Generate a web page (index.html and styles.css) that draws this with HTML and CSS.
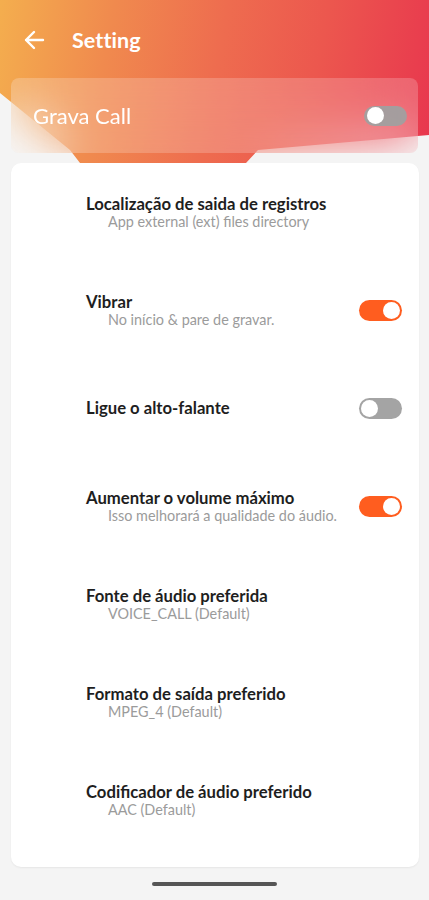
FILE: index.html
```html
<!DOCTYPE html>
<html lang="pt">
<head>
<meta charset="utf-8">
<title>Setting</title>
<link rel="stylesheet" href="styles.css">
</head>
<body>
<div class="app">
  <div class="hero-bg"></div>
  <header class="topbar">
    <svg class="back" width="22" height="22" viewBox="0 0 22 22" aria-hidden="true">
      <path d="M20 11H3M11 3L3 11L11 19" fill="none" stroke="#fff" stroke-width="2.4" stroke-linecap="round" stroke-linejoin="round"/>
    </svg>
    <h1 class="title">Setting</h1>
  </header>

  <section class="grava">
    <span class="grava-label">Grava Call</span>
    <span class="toggle toggle-dim"><span class="thumb"></span></span>
  </section>

  <div class="gap"></div>

  <main class="list">
    <div class="row">
      <div class="texts">
        <div class="row-title">Localização de saida de registros</div>
        <div class="row-sub">App external (ext) files directory</div>
      </div>
    </div>
    <div class="row">
      <div class="texts">
        <div class="row-title">Vibrar</div>
        <div class="row-sub">No início &amp; pare de gravar.</div>
      </div>
      <span class="toggle toggle-on"><span class="thumb"></span></span>
    </div>
    <div class="row">
      <div class="texts">
        <div class="row-title">Ligue o alto-falante</div>
      </div>
      <span class="toggle toggle-off"><span class="thumb"></span></span>
    </div>
    <div class="row">
      <div class="texts">
        <div class="row-title">Aumentar o volume máximo</div>
        <div class="row-sub">Isso melhorará a qualidade do áudio.</div>
      </div>
      <span class="toggle toggle-on"><span class="thumb"></span></span>
    </div>
    <div class="row">
      <div class="texts">
        <div class="row-title">Fonte de áudio preferida</div>
        <div class="row-sub">VOICE_CALL (Default)</div>
      </div>
    </div>
    <div class="row">
      <div class="texts">
        <div class="row-title">Formato de saída preferido</div>
        <div class="row-sub">MPEG_4 (Default)</div>
      </div>
    </div>
    <div class="row">
      <div class="texts">
        <div class="row-title">Codificador de áudio preferido</div>
        <div class="row-sub">AAC (Default)</div>
      </div>
    </div>
  </main>

  <div class="home-bar"></div>
</div>
</body>
</html>
```
FILE: styles.css
```css
* { box-sizing: border-box; }
html, body { margin: 0; padding: 0; }
body {
  background: #f4f4f4;
  font-family: Lato, "Open Sans", "Liberation Sans", sans-serif;
  width: 429px;
  height: 900px;
  overflow: hidden;
}
.app {
  position: relative;
  width: 429px;
  min-height: 900px;
}
.hero-bg {
  position: absolute;
  top: 0;
  left: 0;
  width: 429px;
  height: 165px;
  background: linear-gradient(100deg, #f4ae4e 0%, #f08a4e 25%, #ee6c4f 50%, #ec574e 72%, #e8364e 100%);
  clip-path: polygon(0 0, 100% 0, 100% 135px, 258px 150px, 246px 163px, 80px 163px, 70px 150px, 0 93px);
  z-index: 0;
}
.topbar {
  position: relative;
  z-index: 1;
  height: 78px;
  display: flex;
  align-items: center;
  padding: 1px 0 0 23px;
}
.back { display: block; }
.title {
  margin: 0 0 0 27px;
  color: #fff;
  font-size: 21.5px;
  font-weight: 700;
  letter-spacing: 0.1px;
}
.grava {
  position: relative;
  z-index: 1;
  margin: 0 11px;
  height: 75px;
  border-radius: 8px;
  display: flex;
  align-items: center;
  justify-content: space-between;
  padding: 0 11px 0 22px;
  background: rgba(255, 255, 255, 0.2);
  backdrop-filter: blur(24px);
  -webkit-backdrop-filter: blur(24px);
}
.grava-label {
  color: #fff;
  font-size: 22px;
  font-weight: 400;
}
.gap { height: 10px; }
.list {
  position: relative;
  z-index: 1;
  margin: 0 10px 0 11px;
  background: #fff;
  border-radius: 10px;
  padding-bottom: 18px;
  box-shadow: 0 1px 2px rgba(0,0,0,0.06);
}
.row {
  height: 98px;
  display: flex;
  align-items: center;
  justify-content: space-between;
  padding: 0 17px 0 75px;
}
.row-title {
  font-size: 16.7px;
  font-weight: 700;
  color: #1e1e1e;
  line-height: 19px;
}
.row-sub {
  font-size: 14.4px;
  color: #9b9b9b;
  line-height: 16px;
  padding-left: 22px;
}
.toggle {
  position: relative;
  display: inline-block;
  width: 43px;
  height: 21px;
  border-radius: 11px;
  flex: none;
}
.thumb {
  position: absolute;
  top: 2px;
  width: 17px;
  height: 17px;
  border-radius: 50%;
  background: #fff;
}
.toggle-on { background: #ff5d1f; }
.toggle-on .thumb { right: 2px; }
.toggle-off { background: #a4a4a4; }
.toggle-off .thumb { left: 2px; }
.toggle-dim { background: rgba(160, 160, 160, 0.95); width: 43px; height: 20px; }
.toggle-dim .thumb { left: 3px; top: 1.5px; }
.home-bar {
  width: 125px;
  height: 4px;
  border-radius: 2px;
  background: #555;
  margin: 15px auto 0;
}
```
